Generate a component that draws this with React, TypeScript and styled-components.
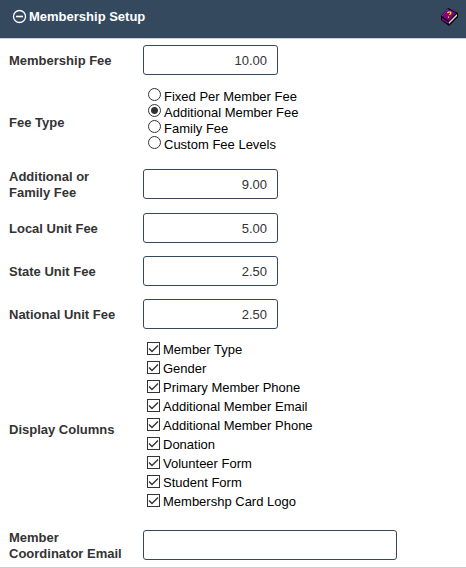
import React from "react";
import styled, { createGlobalStyle } from "styled-components";

const GlobalStyle = createGlobalStyle`
  * { box-sizing: border-box; }
  body {
    margin: 0;
    background: #fff;
    font: 13px/16px "Liberation Sans", Arial, sans-serif;
    color: #000;
  }
`;

const Panel = styled.form`
  border-bottom: 1px solid #ccc;
`;

const Header = styled.header`
  display: flex;
  align-items: flex-start;
  justify-content: space-between;
  height: 39px;
  padding: 8px 8px 0 12px;
  background: #34495e;
  border-bottom: 1px solid #ccc;
`;

const Toggle = styled.button`
  display: flex;
  align-items: center;
  gap: 2px;
  padding: 0;
  border: 0;
  background: none;
  color: #fff;
  font: inherit;
  font-weight: bold;
  line-height: 17px;
  cursor: pointer;
`;

const HelpLink = styled.a`
  display: block;
  line-height: 0;
`;

const Row = styled.div<{ $pad?: string }>`
  display: grid;
  grid-template-columns: 134px minmax(0, 1fr);
  align-items: center;
  padding: ${(p) => p.$pad ?? "6px 9px 7px"};
`;

const Label = styled.label`
  max-width: 120px;
  padding-top: 2px;
  color: #333;
  font-weight: bold;
`;

const Field = styled.input<{ $wide?: boolean }>`
  width: ${(p) => (p.$wide ? "254px" : "135px")};
  max-width: 100%;
  height: 30px;
  padding: 0 10px;
  border: 1px solid #34495e;
  border-radius: 3px;
  background: #fff;
  color: #333;
  font: inherit;
  text-align: ${(p) => (p.$wide ? "left" : "right")};
`;

const Options = styled.div<{ $space: string }>`
  display: flex;
  flex-direction: column;
  align-items: flex-start;
  padding: ${(p) => p.$space};
`;

const RadioOption = styled.label`
  display: flex;
  align-items: flex-start;
  gap: 3px;
  height: 16px;
  line-height: 18px;
`;

const CheckOption = styled.label`
  display: flex;
  gap: 3px;
  line-height: 19px;
`;

const Radio = styled.input`
  appearance: none;
  width: 13px;
  height: 13px;
  margin: 0;
  border: 1px solid #333;
  border-radius: 50%;
  background: #fff;
  &:checked {
    background: radial-gradient(circle, #333 3px, #fff 4px);
  }
`;

const CheckBox = styled.span`
  display: grid;
  width: 13px;
  height: 13px;
  margin-top: 2px;
  > * { grid-area: 1 / 1; }
  > svg { pointer-events: none; visibility: hidden; }
  > input:checked + svg { visibility: visible; }
`;

const Check = styled.input`
  appearance: none;
  width: 13px;
  height: 13px;
  margin: 0;
  border: 1px solid #333;
  background: #fff;
`;

const MinusIcon = () => (
  <svg width="15" height="17" viewBox="0 0 15 17" fill="none" stroke="#fff" aria-hidden="true">
    <circle cx="7.5" cy="8.5" r="6" strokeWidth="1.3" />
    <path d="M4 8.5h7" strokeWidth="1.6" />
  </svg>
);

const BookIcon = () => (
  <svg width="17" height="18" viewBox="0 0 17 18" aria-hidden="true">
    <path d="M0 8L7 0L17 5V9L8 18L0 12Z" fill="#000" />
    <path d="M1 8L7 1L15 5L8 13Z" fill="#800080" />
    <path d="M1 8L7 1" stroke="#c030c0" strokeWidth="0.8" />
    <path d="M8 14L16 6V8L8 16Z" fill="#ddd" />
    <path d="M1 10L8 14.500V16L1 12Z" fill="#900090" />
    <path d="M6.500 5L7.500 4H9.500L10 5L8.500 7M7.500 8.500v1.200" fill="none" stroke="#ff0" strokeWidth="1.2" />
  </svg>
);

const fees = [
  { id: "local", label: "Local Unit Fee", value: "5.00" },
  { id: "state", label: "State Unit Fee", value: "2.50" },
  { id: "national", label: "National Unit Fee", value: "2.50" },
];

const feeTypes = ["Fixed Per Member Fee", "Additional Member Fee", "Family Fee", "Custom Fee Levels"];

const columns = [
  "Member Type",
  "Gender",
  "Primary Member Phone",
  "Additional Member Email",
  "Additional Member Phone",
  "Donation",
  "Volunteer Form",
  "Student Form",
  "Membershp Card Logo",
];

export default function App() {
  return (
    <>
      <GlobalStyle />
      <Panel>
        <Header>
          <Toggle type="button" aria-expanded="true">
            <MinusIcon />
            Membership Setup
          </Toggle>
          <HelpLink href="#help" aria-label="Help">
            <BookIcon />
          </HelpLink>
        </Header>
        <Row>
          <Label htmlFor="membership">Membership Fee</Label>
          <Field id="membership" defaultValue="10.00" />
        </Row>
        <Row role="radiogroup" aria-labelledby="fee-type">
          <Label as="span" id="fee-type">Fee Type</Label>
          <Options $space="0 0 4px 5px">
            {feeTypes.map((name, i) => (
              <RadioOption key={name}>
                <Radio type="radio" name="feeType" defaultChecked={i === 1} />
                {name}
              </RadioOption>
            ))}
          </Options>
        </Row>
        <Row $pad="4px 9px 6px">
          <Label htmlFor="additional">Additional or Family Fee</Label>
          <Field id="additional" defaultValue="9.00" />
        </Row>
        {fees.map((fee) => (
          <Row key={fee.id}>
            <Label htmlFor={fee.id}>{fee.label}</Label>
            <Field id={fee.id} defaultValue={fee.value} />
          </Row>
        ))}
        <Row role="group" aria-labelledby="columns" $pad="4px 9px 6px">
          <Label as="span" id="columns">Display Columns</Label>
          <Options $space="0 0 7px 4px">
            {columns.map((name) => (
              <CheckOption key={name}>
                <CheckBox>
                  <Check type="checkbox" defaultChecked />
                  <svg width="13" height="13" viewBox="0 0 13 13" fill="none" stroke="#333" strokeWidth="1.4">
                    <path d="M2 6.500L5 9.500L11 3.500" />
                  </svg>
                </CheckBox>
                {name}
              </CheckOption>
            ))}
          </Options>
        </Row>
        <Row $pad="4px 9px 5px">
          <Label htmlFor="email">Member Coordinator Email</Label>
          <Field id="email" type="email" $wide />
        </Row>
      </Panel>
    </>
  );
}
